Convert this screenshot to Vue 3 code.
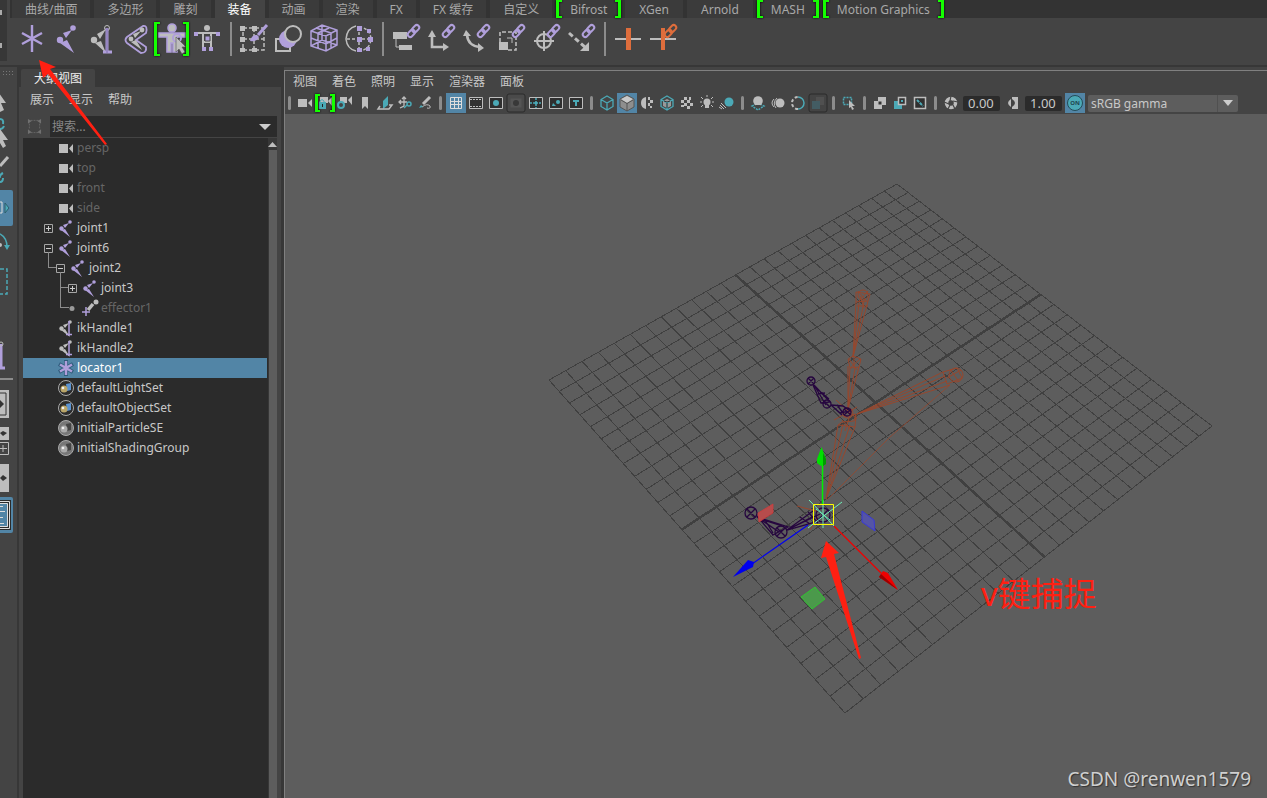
<script setup>
import { ref, computed } from 'vue';

const L = '#b09fdb';
const G = '#bdbdbd';
const T = '#4ba9b6';
const O = '#de6d3c';

const shelfTabs = [
    { name: '曲线/曲面' },
    { name: '多边形' },
    { name: '雕刻' },
    { name: '装备' },
    { name: '动画' },
    { name: '渲染' },
    { name: 'FX' },
    { name: 'FX 缓存' },
    { name: '自定义' },
    { name: 'Bifrost', plugin: true, fresh: true },
    { name: 'XGen', plugin: true },
    { name: 'Arnold', plugin: true },
    { name: 'MASH', plugin: true, fresh: true },
    { name: 'Motion Graphics', plugin: true, fresh: true },
];
const activeShelf = ref('装备');

const link = (c) => `<g fill="none" stroke="${c}" stroke-width="2"><rect x="-4" y="-2" width="8" height="5" rx="2.5" transform="translate(21 10) rotate(-45)"/><rect x="-4" y="-3" width="8" height="5" rx="2.5" transform="translate(26 6) rotate(-45)"/></g>`;

// 32 x 32 glyphs for the shelf
const shelfIcons = {
    locator: `<path d="M16 2V29M6 10L26 21M26 10L6 21" stroke="${L}" stroke-width="2.4"/>`,
    joint: `<g fill="${L}"><circle cx="22" cy="5" r="2.8"/><circle cx="9" cy="17" r="3.2"/><path d="M21 7L12 10L15 15ZM9 20L23 30L16 17Z"/></g>`,
    ikHandle: `<g fill="${G}"><circle cx="21" cy="5" r="2.5" fill="none" stroke="${G}"/><circle cx="8" cy="17" r="3.2"/><path d="M20 6L11 11L14 16ZM9 20L20 30L15 18Z"/></g><path d="M21 5V30M17 29H26" stroke="${L}" stroke-width="3"/><path d="M21 5V30" stroke="#7d6ca8"/>`,
    skin: `<path d="M22 3L6 14Q3 17 6 20L20 30Q26 30 25 24L15 17L25 10Q27 2 22 3Z" fill="none" stroke="${L}" stroke-width="1.8"/><g fill="${G}"><circle cx="21" cy="7" r="2.4"/><circle cx="10" cy="16" r="2.4"/><path d="M20 8L12 11L14 15ZM10 19L21 27L15 17Z"/></g>`,
    human: `<g fill="${G}" stroke="${L}" stroke-width="1.6"><circle cx="16" cy="5" r="4"/><path d="M3 10H29V14H21V29H17V20H15V29H11V14H3Z"/></g><circle cx="21" cy="15" r="4" fill="none" stroke="${L}" stroke-width="2"/><path d="M20 14V29L23 26L26 31L29 29L26 24H30Z" fill="${G}" stroke="#555" stroke-width=".6"/>`,
    rig: `<circle cx="16" cy="5" r="3" fill="${G}"/><path d="M6 10H26M12 10V27M20 10V27M12 19H20" stroke="${G}" stroke-width="2" fill="none"/><path d="M3 9h4v4H3zM25 9h4v4h-4zM11 24h4v4h-4zM18 24h4v4h-4z" fill="${L}"/><path d="M14 13h5v5h-5z" fill="${L}" stroke="#444"/>`,
    paint: `<path d="M5 5H26V27H5ZM5 16H26M16 5V27" fill="none" stroke="${G}" stroke-width="1.5" stroke-dasharray="4 2"/><path d="M2 3h5v5H2zM14 3h5v5h-5zM2 14h5v5H2zM2 25h5v4H2zM14 25h5v4h-5z" fill="${G}"/><path d="M29 2L20 12" stroke="${L}" stroke-width="3"/><path d="M12 18Q14 11 19 12L21 14Q19 19 12 18Z" fill="${L}"/>`,
    blend: `<path d="M12 16H3V28H17V24" fill="none" stroke="${G}" stroke-width="2"/><circle cx="15" cy="16" r="9" fill="${L}"/><circle cx="20" cy="11" r="8" fill="#444" stroke="${G}" stroke-width="2"/>`,
    lattice: `<path d="M3 8L14 2L29 7V22L18 28L3 23ZM3 8L18 13L29 7M18 13V28M3 15L18 21L29 15M10 10V25M23 10V25M8 5L23 10M21 5L10 10M3 23L14 17L29 22M14 2V17" fill="none" stroke="${L}" stroke-width="1.5"/>`,
    cluster: `<path d="M13 3Q4 5 3 16Q4 26 13 28" fill="none" stroke="${G}" stroke-width="1.5"/><path d="M16 4Q27 5 28 16Q27 27 16 28M4 16H28M16 4V28" fill="none" stroke="${G}" stroke-width="1.5" stroke-dasharray="3 2"/><path d="M14 3h5v5h-5zM14 14h5v5h-5zM14 25h5v4h-5zM24 6h4v4h-4zM25 14h5v5h-5zM23 24h4v4h-4z" fill="${L}"/>`,
    parent: `<path d="M3 9h14v7H3zM9 22h13v5H9z" fill="${G}"/><path d="M6 16V24H10" stroke="${G}" fill="none"/>${link(L)}`,
    point: `<path d="M7 12V24H20" stroke="${G}" stroke-width="2.6" fill="none"/><path d="M7 7L11 14H3ZM24 24L18 20V28Z" fill="${G}"/>${link(L)}`,
    orient: `<path d="M7 12Q8 23 20 24" stroke="${G}" stroke-width="2.6" fill="none"/><path d="M6 7L11 13H3ZM24 25L18 20V29Z" fill="${G}"/>${link(L)}`,
    scale: `<path d="M5 19V9H21V27H13" fill="none" stroke="${G}" stroke-width="1.6" stroke-dasharray="4 2"/><path d="M4 19h9v8H4z" fill="${G}"/><path d="M12 15H17V20" stroke="${G}" fill="none"/>${link(L)}`,
    aim: `<circle cx="14" cy="18" r="7" fill="none" stroke="${G}" stroke-width="2"/><path d="M14 8V28M4 18H24" stroke="${G}" stroke-width="2"/>${link(L)}`,
    pole: `<path d="M4 10L21 25" stroke="${G}" stroke-width="3" stroke-dasharray="5 3"/><path d="M24 28V19L15 28Z" fill="${G}"/>${link(L)}`,
    curve: `<path d="M3 16H29" stroke="${G}" stroke-width="2"/><path d="M14 5h5v22h-5z" fill="${O}"/>`,
    curveLink: `<path d="M3 16H29" stroke="${G}" stroke-width="2"/><path d="M14 5h4v22h-4z" fill="${O}"/>${link(O)}`,
};

const shelfGroups = [
    ['locator', 'joint', 'ikHandle', 'skin', 'human', 'rig'],
    ['paint', 'blend', 'lattice', 'cluster'],
    ['parent', 'point', 'orient', 'scale', 'aim', 'pole'],
    ['curve', 'curveLink'],
];

// 14 x 36 glyphs, the tool box is cut by the window edge
const toolIcons = {
    select: `<path d="M-4 10L6 24H1L4 31L0 33Z" fill="${G}"/>`,
    lasso: `<path d="M0 3Q4 3 3 8M0 13Q3 13 4 10" stroke="${T}" stroke-width="2" fill="none"/><path d="M0 13L8 24H3L6 30L3 32L0 27Z" fill="${G}"/>`,
    brush: `<path d="M0 13L8 4" stroke="${G}" stroke-width="3"/><path d="M3 20Q-1 22 0 25M0 29Q3 29 3 25" stroke="${T}" stroke-width="2" fill="none"/>`,
    move: `<path d="M0 12H2V23H0" stroke="#ddd" fill="none"/><path d="M5 13V23L9 18Z" fill="${T}" stroke="#2f5d6c"/>`,
    rotate: `<path d="M0 7Q7 11 7 20" stroke="${T}" fill="none" stroke-width="1.5"/><path d="M4 18H10L7 23Z" fill="${T}"/><circle cx="0" cy="18" r="2" fill="${G}"/>`,
    scale: `<path d="M0 5H7V30H0" stroke="${T}" fill="none" stroke-width="1.5" stroke-dasharray="4 2"/>`,
    joint: `<path d="M1 5V30M0 29H5" stroke="${L}" stroke-width="3"/><circle cx="1" cy="5" r="2" fill="none" stroke="${G}"/>`,
    single: `<path d="M0 4H9V32H0Z" fill="${G}"/><path d="M0 7H6V29H0" fill="none" stroke="#333"/><path d="M0 14L4 18L0 22Z" fill="#333"/>`,
    four: `<path d="M0 4h9v13H0z" fill="${G}"/><path d="M0 10L3 8L7 10L3 13Z" fill="#333"/><path d="M0 19.5H8.5V31.5H0M0 25.5H7M3 22V29" fill="none" stroke="${G}"/>`,
    two: `<path d="M0 4h9v28H0z" fill="${G}"/><path d="M0 18L3 15L7 18L3 21Z" fill="#333"/>`,
    outliner: `<path d="M0 4.5H9.5V31.5H0" fill="none" stroke="#2b2b2b" stroke-width="3"/><path d="M0 4.5H9.500V31.5H0M0 9.5H3M0 14.500H5M0 20.5H3M0 26.5H4M0 6.500H7.500V29.5H0" fill="none" stroke="#ddd"/>`,
};
const toolsTop = ['select', 'lasso', 'brush', 'move', 'rotate', 'scale'];
const layouts = ['single', 'four', 'two', 'outliner'];
const activeTool = ref('move');

// 16 x 16 glyphs for the tree
const jointSmall = (c) => `<g fill="${c}"><circle cx="12" cy="2" r="1.8"/><circle cx="3.500" cy="8.500" r="2.200"/><path d="M11 3L5 5L7 8ZM3 10L12 17L7 9Z"/></g>`;
const setSmall = (bg, ball, box) => `<circle cx="8" cy="8" r="7.5" fill="${bg}" stroke="#aaa"/><path d="M8 4L13 3V10L9 11Z" fill="${box}"/><circle cx="6" cy="9" r="3.5" fill="${ball}"/><circle cx="5" cy="8" r="1.3" fill="#eee"/>`;
const treeIcons = {
    camera: `<path d="M1 4h9v9H1zM11 8.500L15 4V13Z" fill="${G}"/>`,
    joint: jointSmall(L),
    effector: `<path d="M6 10L11 4" stroke="${G}" stroke-width="3.500"/><circle cx="14" cy="2" r="2.5" fill="${G}"/><path d="M4 7V16M0 12H8" stroke="${L}" stroke-width="1.5"/>`,
    ik: `${jointSmall(G)}<path d="M11 1V16M8 14.5H14" stroke="${L}" stroke-width="1.5"/>`,
    locator: `<path d="M8 0V16M1 4L15 12M15 4L1 12" stroke="#2f5d7c" stroke-width="4"/><path d="M8 1V15M2 4.5L14 11.5M14 4.5L2 11.5" stroke="${L}" stroke-width="2.5"/>`,
    set: setSmall('#2b2b2b', '#b8a468', '#5b92cf'),
    shader: setSmall('#777', '#aaa', '#444'),
};

const nodes = [
    { name: 'persp', icon: 'camera', dim: true },
    { name: 'top', icon: 'camera', dim: true },
    { name: 'front', icon: 'camera', dim: true },
    { name: 'side', icon: 'camera', dim: true },
    { name: 'joint1', icon: 'joint', toggle: 'plus' },
    { name: 'joint6', icon: 'joint', toggle: 'minus' },
    { name: 'joint2', icon: 'joint', toggle: 'minus', depth: 1 },
    { name: 'joint3', icon: 'joint', toggle: 'plus', depth: 2 },
    { name: 'effector1', icon: 'effector', toggle: 'dot', depth: 2, dim: true },
    { name: 'ikHandle1', icon: 'ik' },
    { name: 'ikHandle2', icon: 'ik' },
    { name: 'locator1', icon: 'locator' },
    { name: 'defaultLightSet', icon: 'set' },
    { name: 'defaultObjectSet', icon: 'set' },
    { name: 'initialParticleSE', icon: 'shader' },
    { name: 'initialShadingGroup', icon: 'shader' },
];
const selected = ref('locator1');
const search = ref('');

// 20 x 20 glyphs for the panel toolbar
const frame = `<path d="M3.5 4.5h13v11h-13z" fill="#2f2f2f" stroke="${G}"/>`;
const cube = (c) => `<path d="M10 3L16 6.5V13.5L10 17L4 13.5V6.5ZM4 6.5L10 10L16 6.5M10 10V17" fill="none" stroke="${c}" stroke-width="1.3"/>`;
const panelIcons = {
    camera: `<path d="M3 6h9v8H3zM13 10L17 6V14Z" fill="${G}"/>`,
    lock: `<path d="M5 4h8v6H5zM13 8L17 4V13Z" fill="${G}"/><path d="M4 9h7v7H4z" fill="${T}"/><path d="M5 10V8Q7 5 9 8V10" stroke="${T}" fill="none"/><path d="M7.5 11v3" stroke="#222"/>`,
    gearCam: `<path d="M5 4h7v6H5zM13 7L17 3V12Z" fill="${G}"/><circle cx="6" cy="12" r="3" fill="#444" stroke="${T}" stroke-width="2"/>`,
    bookmark: `<path d="M7 4H13V16L10 13L7 16Z" fill="${G}"/>`,
    plane: `<path d="M8 8L13 3V12L8 16Z" fill="${T}"/><path d="M5 13L3 16H14L17 12H14" fill="none" stroke="${G}" stroke-width="1.5"/>`,
    pan: `<path d="M9 4V13L5 15M4 9H12M7 6L9 4L11 6M6 7L4 9L6 11" fill="none" stroke="${G}" stroke-width="1.3"/><circle cx="14" cy="11" r="2" fill="none" stroke="${T}" stroke-width="1.5"/><path d="M12 12L9 15" stroke="${T}" stroke-width="1.5"/>`,
    pencil: `<path d="M15 4L8 11" stroke="${G}" stroke-width="3"/><path d="M7 14Q12 10 15 13Q16 16 12 15" fill="none" stroke="${G}"/><path d="M4 15L6 12L8 14Z" fill="${T}"/>`,
    grid: `<path d="M4.5 4.5h11v11h-11zM8.5 4V16M12.5 4V16M4 8.5H16M4 11.5H16" fill="none" stroke="#ddd"/>`,
    film: `<path d="M3.5 4.5h13v11h-13z" fill="#333" stroke="${G}"/><path d="M4 6.5H16M4 13.5H16" stroke="${G}" stroke-dasharray="2 1"/>`,
    gate: `${frame}<circle cx="10" cy="10" r="3" fill="${T}"/>`,
    mask: `<rect x="1" y="1" width="18" height="18" rx="2" fill="#4a4a4a" stroke="#2b2b2b"/><path d="M4.5 5.5h11v9h-11z" fill="#555"/><circle cx="10" cy="10" r="3" fill="#383838"/>`,
    field: `${frame}<path d="M4 10H16M10 5V15" stroke="${T}" stroke-width="1.5" stroke-dasharray="2 1"/><circle cx="10" cy="10" r="1.5" fill="${T}"/>`,
    safe: `${frame}<circle cx="12" cy="9" r="2" fill="${T}"/><path d="M6 13L7 10L10 13Z" fill="${T}"/>`,
    title: `${frame}<path d="M7 8H13M10 8V13" stroke="${T}" stroke-width="2"/>`,
    wire: cube(T),
    shaded: `<path d="M10 2L17 6V14L10 18L3 14V6Z" fill="#8e8e8e"/><path d="M10 3L16 6L10 10L4 6Z" fill="#c9c9c9"/><path d="M4 7L10 10.5L16 7M10 10V18M10 2L17 6V14L10 18L3 14V6Z" fill="none" stroke="#555"/>`,
    half: `<path d="M9 4Q4 5 4 10Q4 15 9 16Z" fill="${G}"/><path d="M11 4h2v3h-2zM13 7h3v3h-3zM11 10h2v3h-2zM13 13h2v2h-2z" fill="${G}"/>`,
    wireShade: `<path d="M6 8L10 6L14 8V13L10 15L6 13Z" fill="#999"/>${cube(T)}<path d="M7 8L10 9L13 8M10 10V15" stroke="#333" fill="none"/>`,
    checker: `<path d="M7 4h3v3H7zM12 4h2v3h-2zM4 7h3v3H4zM10 7h3v3h-3zM7 10h3v3H7zM13 10h3v3h-3zM4 12h3v2H4zM10 13h3v3h-3z" fill="${G}"/>`,
    bulb: `<circle cx="10" cy="9" r="3.5" fill="${G}"/><path d="M8 11h4v4H8z" fill="${G}"/><path d="M10 2V4M3 9H5M15 9H17M4 4L6 6M16 4L14 6M4 14L6 12M16 14L14 12" stroke="${G}"/>`,
    shadow: `<path d="M3 12L7 16M2 14L5 16M4 10L9 15" stroke="${G}"/><circle cx="12" cy="9" r="4.5" fill="${T}"/>`,
    ao: `<path d="M4 13L10 10L16 13L10 17Z" fill="none" stroke="${T}" stroke-width="1.5" stroke-dasharray="2 1"/><circle cx="10" cy="8" r="4.800" fill="${G}"/><path d="M8 12.500H12" stroke="#444"/>`,
    blur: `<circle cx="12" cy="10" r="4.5" fill="${G}"/><path d="M6 6Q2 10 6 14M9 5Q4 10 8 15" fill="none" stroke="${G}"/>`,
    aa: `<path d="M10 4A6 6 0 0 1 10 16" fill="none" stroke="${T}" stroke-width="1.5"/><path d="M10 16A6 6 0 0 1 10 4" fill="none" stroke="${G}" stroke-width="2" stroke-dasharray="3 2"/>`,
    depth: `<rect x="1" y="1" width="18" height="18" rx="2" fill="#444" stroke="#2b2b2b"/><path d="M8 4h8v8h-4V8H8z" fill="#505050"/><path d="M4 8h8v8H4z" fill="#435c63"/>`,
    isolate: `<path d="M4.5 4.5h8v7h-8z" fill="none" stroke="${T}" stroke-width="1.5" stroke-dasharray="2 1"/><path d="M10 7L16 13H13L15 16L13 17L12 14L10 15Z" fill="${G}"/>`,
    xrayA: `<path d="M4 8h8v8H4zM8 4h8v8H8z" fill="${G}"/><path d="M8.5 8.5h3v3h-3z" fill="#333"/>`,
    xrayB: `<path d="M4 8h8v8H4z" fill="${T}"/><path d="M8.5 4.5h7v7h-7z" fill="#333" stroke="${G}" stroke-width="1.5"/><path d="M11 7h2v2h-2z" fill="${T}"/>`,
    xrayC: `<path d="M4.5 4.5h11v11h-11z" fill="#2f2f2f" stroke="${G}" stroke-width="1.5"/><path d="M7 7L13 13" stroke="${T}" stroke-width="2" stroke-dasharray="3 1"/>`,
    exposure: `<circle cx="10" cy="10" r="4.5" fill="none" stroke="${G}" stroke-width="3.5"/><path d="M10 3L9 8M17 9L12 8M14 16L12 12M7 16L9 12M3 9L8 11" stroke="#444" stroke-width="1.2"/>`,
    gamma: `<path d="M8 6Q2 10 8 14Z" fill="${G}"/><path d="M9 4H15V16H9V14Q15 10 9 6Z" fill="${G}"/>`,
};
const panelGroups = [
    ['camera', 'lock', 'gearCam', 'bookmark', 'plane', 'pan', 'pencil'],
    ['grid', 'film', 'gate', 'mask', 'field', 'safe', 'title'],
    ['wire', 'shaded', 'half', 'wireShade', 'checker', 'bulb', 'shadow'],
    ['ao', 'blur', 'aa', 'depth'],
    ['isolate'],
    ['xrayA', 'xrayB', 'xrayC'],
];
const panelOn = ['grid', 'shaded'];
const exposure = ref('0.00');
const gamma = ref('1.00');

// ground plane in perspective
const top = [897, 184];
const right = [1212, 426];
const bottom = [845, 713];
const left = [549, 380];

const project = (u, v) => {
    const dx1 = right[0] - bottom[0];
    const dx2 = left[0] - bottom[0];
    const sx = top[0] - right[0] + bottom[0] - left[0];
    const dy1 = right[1] - bottom[1];
    const dy2 = left[1] - bottom[1];
    const sy = top[1] - right[1] + bottom[1] - left[1];
    const det = dx1 * dy2 - dx2 * dy1;
    const g = (sx * dy2 - dx2 * sy) / det;
    const h = (dx1 * sy - sx * dy1) / det;
    const w = g * u + h * v + 1;
    return [
        ((right[0] - top[0] + g * right[0]) * u + (left[0] - top[0] + h * left[0]) * v + top[0]) / w,
        ((right[1] - top[1] + g * right[1]) * u + (left[1] - top[1] + h * left[1]) * v + top[1]) / w,
    ];
};

const CELLS = 24;
const gridLines = computed(() => {
    const out = [];
    for (let i = 0; i <= CELLS; i++) {
        const t = i / CELLS;
        out.push({ a: project(t, 0), b: project(t, 1), axis: i === CELLS / 2 });
        out.push({ a: project(0, t), b: project(1, t), axis: i === CELLS / 2 });
    }
    return out;
});
</script>

<template>
    <div class="app">
        <header class="shelf">
            <div class="shelf-side">
                <i></i>
                <i></i>
            </div>
            <div class="shelf-main">
                <nav class="shelf-tabs">
                    <button
                        v-for="tab in shelfTabs"
                        :key="tab.name"
                        type="button"
                        class="shelf-tab"
                        :class="{ active: tab.name === activeShelf, plugin: tab.plugin, fresh: tab.fresh }"
                        @click="activeShelf = tab.name"
                    >{{ tab.name }}</button>
                </nav>
                <div class="shelf-icons">
                    <div v-for="(group, g) in shelfGroups" :key="g" class="group">
                        <button
                            v-for="icon in group"
                            :key="icon"
                            type="button"
                            class="shelf-btn"
                            :class="{ fresh: icon === 'human' }"
                            :aria-label="icon"
                        >
                            <svg viewBox="0 0 32 32" v-html="shelfIcons[icon]"></svg>
                        </button>
                    </div>
                </div>
            </div>
        </header>

        <main class="work">
            <aside class="tools">
                <div class="grip"></div>
                <button
                    v-for="tool in toolsTop"
                    :key="tool"
                    type="button"
                    class="tool"
                    :class="{ active: tool === activeTool }"
                    :aria-label="tool"
                    @click="activeTool = tool"
                >
                    <svg viewBox="0 0 14 36" v-html="toolIcons[tool]"></svg>
                </button>
                <button type="button" class="tool last-tool" aria-label="joint">
                    <svg viewBox="0 0 14 36" v-html="toolIcons.joint"></svg>
                </button>
                <hr class="tool-line">
                <button
                    v-for="item in layouts"
                    :key="item"
                    type="button"
                    class="tool"
                    :class="{ active: item === 'outliner' }"
                    :aria-label="item"
                >
                    <svg viewBox="0 0 14 36" v-html="toolIcons[item]"></svg>
                </button>
            </aside>

            <section class="outliner">
                <div class="outliner-tabs">
                    <h2>大纲视图</h2>
                </div>
                <nav class="menu outliner-menu">
                    <button type="button">展示</button>
                    <button type="button">显示</button>
                    <button type="button">帮助</button>
                </nav>
                <div class="search">
                    <svg viewBox="0 0 16 18" class="search-icon">
                        <path d="M4 2.5H12M4 15.5H12M2.5 6V12M13.5 6V12" stroke="#666" stroke-dasharray="2 1" />
                        <path d="M1 1L5 3L1 6ZM15 1L11 3L15 6ZM1 12L5 15L1 17ZM15 12L11 15L15 17Z" fill="#707070" />
                    </svg>
                    <div class="search-box">
                        <input v-model="search" type="text" placeholder="搜索..." aria-label="搜索">
                        <svg viewBox="0 0 12 6" class="caret"><path d="M0 0H12L6 6Z" fill="#ccc" /></svg>
                    </div>
                </div>
                <div class="tree-wrap">
                    <ul class="tree">
                        <li
                            v-for="node in nodes"
                            :key="node.name"
                            class="node"
                            :class="[`depth-${node.depth || 0}`, node.toggle, { dim: node.dim, selected: node.name === selected }]"
                            @click="selected = node.name"
                        >
                            <span class="toggle">
                                <svg v-if="node.toggle && node.toggle !== 'dot'" viewBox="0 0 11 11">
                                    <path d="M1.5 1.5h8v8h-8z" fill="#2b2b2b" stroke="#a5a5a5" />
                                    <path d="M3 5.5H8" stroke="#ccc" />
                                    <path v-if="node.toggle === 'plus'" d="M5.5 3V8" stroke="#ccc" />
                                </svg>
                                <svg v-if="node.toggle === 'dot'" viewBox="0 0 11 11"><circle cx="5" cy="5.5" r="2.5" fill="#9a9a9a" /></svg>
                            </span>
                            <svg class="node-icon" viewBox="0 0 16 16" v-html="treeIcons[node.icon]"></svg>
                            <span>{{ node.name }}</span>
                        </li>
                    </ul>
                    <div class="scroll">
                        <svg viewBox="0 0 9 12"><path d="M0 9L4.5 4L9 9Z" fill="#bdbdbd" /></svg>
                        <div class="thumb"></div>
                    </div>
                </div>
            </section>

            <section class="panel">
                <nav class="menu panel-menu">
                    <button type="button">视图</button>
                    <button type="button">着色</button>
                    <button type="button">照明</button>
                    <button type="button">显示</button>
                    <button type="button">渲染器</button>
                    <button type="button">面板</button>
                </nav>
                <div class="panel-bar">
                    <div v-for="(group, g) in panelGroups" :key="g" class="group">
                        <button
                            v-for="icon in group"
                            :key="icon"
                            type="button"
                            class="panel-btn"
                            :class="{ active: panelOn.includes(icon), fresh: icon === 'lock' }"
                            :aria-label="icon"
                        >
                            <svg viewBox="0 0 20 20" v-html="panelIcons[icon]"></svg>
                        </button>
                    </div>
                    <div class="group fields">
                        <button type="button" class="panel-btn" aria-label="exposure">
                            <svg viewBox="0 0 20 20" v-html="panelIcons.exposure"></svg>
                        </button>
                        <input v-model="exposure" type="text" aria-label="exposure value">
                        <button type="button" class="panel-btn" aria-label="gamma">
                            <svg viewBox="0 0 20 20" v-html="panelIcons.gamma"></svg>
                        </button>
                        <input v-model="gamma" type="text" aria-label="gamma value">
                        <button type="button" class="panel-btn active" aria-label="color management">
                            <span class="on">ON</span>
                        </button>
                        <div class="select">
                            <select aria-label="view transform">
                                <option>sRGB gamma</option>
                            </select>
                            <svg viewBox="0 0 10 6"><path d="M0 0H10L5 6Z" fill="#ccc" /></svg>
                        </div>
                    </div>
                </div>

                <div class="viewport">
                    <svg class="scene" viewBox="285 114 982 684">
                        <g shape-rendering="crispEdges" stroke="#404040">
                            <line
                                v-for="(l, i) in gridLines"
                                :key="i"
                                :x1="l.a[0]"
                                :y1="l.a[1]"
                                :x2="l.b[0]"
                                :y2="l.b[1]"
                                :stroke-width="l.axis ? 2.5 : 1"
                            />
                        </g>

                        <!-- inactive skeleton -->
                        <g fill="none" stroke="#97472d" stroke-width="1">
                            <circle cx="863" cy="295" r="5" />
                            <path d="M856 292L870 294L868 301L856 302ZM858 291L866 301M868 291L858 302M856 302L853 357L868 301M859 303L853 357L864 302M860 296L864 308M857 306H868" />
                            <path d="M848 359L853 356L861 359L859 367L850 368ZM848 366L848 409L859 367M850 368L848 409L855 368M849 359L857 370M860 359L850 368M854 357V367" />
                            <circle cx="956" cy="375" r="7" />
                            <path d="M943 372L857 414L950 385M945 376L857 414L947 381M943 372L947 384L962 378L957 368L943 372M950 369L959 382M947 378L961 370" />
                            <path d="M950 385L890 437M890 437L827 500" stroke-width=".8" />
                            <circle cx="848" cy="413" r="5" />
                            <path d="M836 400L857 419M834 420L857 407M844 409L852 417M843 417L856 414L854 421L842 422L838 425L855 427L856 415M838 425L826 499L855 427M843 424L826 499L850 425M842 420L852 431M797 506L820 512M810 530L818 517M852 409L845 431" />
                        </g>

                        <!-- ik chains -->
                        <g fill="none" stroke="#26063f" stroke-width="1.3">
                            <circle cx="811" cy="381" r="4" />
                            <circle cx="827" cy="404" r="4" />
                            <circle cx="847" cy="412" r="4" />
                            <path d="M808 378L814 384M814 378L808 384M813 385L821 403L830 402L814 385L826 405M816 388L829 399M818 394L825 393M831 405L843 406L850 411L840 413L831 405L842 415M844 409L851 415M851 409L844 415M837 405L843 413M824 401L830 407" />
                            <circle cx="751" cy="513" r="6" />
                            <circle cx="781" cy="532" r="6" />
                            <circle cx="823" cy="515" r="7" />
                            <path d="M747 509L755 517M755 509L747 517M777 528L785 536M785 528L777 536M757 516L773 535L788 527L757 517L779 532M760 519L782 526M765 520L773 533M787 530L813 511M787 530L815 522M787 530L812 517M787 530L820 514M800 517L810 524M808 512L818 523M818 510L828 520M828 510L818 520" />
                        </g>

                        <!-- manipulator -->
                        <path d="M809 500L836 528M842 502L808 528M823 500V528M816 509L830 520" stroke="#6ff0b8" fill="none" />
                        <path d="M822.5 464V504" stroke="#00f000" stroke-width="1.5" />
                        <path d="M821.5 447L826 459V464L821 466L817 463V459Z" fill="#00e000" />
                        <path d="M823 453L826 459V464L823 466Z" fill="#009a00" />
                        <path d="M808 525L752 564" stroke="#0000f0" stroke-width="1.2" />
                        <path d="M733 577L748 560L754 562L753 567Z" fill="#0000ee" />
                        <path d="M834 526L882 574" stroke="#f00000" stroke-width="1.2" />
                        <path d="M898 590L879 577L883 571L888 573Z" fill="#ee0000" />
                        <path d="M898 590L879 577L881 574Z" fill="#990000" />
                        <path d="M758 513L773 504V513L759 522Z" fill="#b64c4c" stroke="#d83a3a" stroke-width=".7" />
                        <path d="M862 511L874 520L875 531L862 522Z" fill="#5555a5" stroke="#3838d8" />
                        <path d="M801 597L815 587L825 599L812 609Z" fill="#4b994b" stroke="#2fc42f" />
                        <path d="M813.5 504.5h20v20h-20z" fill="none" stroke="#ffff00" />

                        <path d="M826 541L839 553L834 554L861 658L859 659L826 557L821 558Z" fill="#ff2012" />
                        <text x="981" y="606" class="note">v键捕捉</text>
                    </svg>
                    <span class="watermark">CSDN @renwen1579</span>
                </div>
            </section>
        </main>

        <svg class="pointer" viewBox="0 0 120 150">
            <path d="M39 60L56 67L50 69L107 144L105 145L48 74L43 78Z" fill="#ff2012" />
        </svg>
    </div>
</template>

<style>
body {
    margin: 0;
    background: #444444;
}
</style>

<style scoped>
.app {
    position: relative;
    display: flex;
    flex-direction: column;
    height: 100vh;
    overflow: hidden;
    background: #444444;
    color: #c8c8c8;
    font-family: "Noto Sans", "Noto Sans CJK SC", sans-serif;
    font-size: 12px;
    line-height: 18px;
}

button,
input,
select {
    margin: 0;
    padding: 0;
    border: 0;
    background: none;
    color: inherit;
    font: inherit;
    outline: none;
}

svg {
    display: block;
    overflow: visible;
}

.group {
    display: flex;
    align-items: center;
}

/* --- SHELF --- */
.shelf {
    display: flex;
    gap: 3px;
    height: 65px;
    flex: none;
    border-bottom: 2px solid #373737;
}

.shelf-side {
    display: flex;
    flex-direction: column;
    gap: 28px;
    width: 7px;
    height: 51px;
    padding-top: 10px;
    background: #373737;
}

.shelf-side i {
    width: 2px;
    height: 5px;
    background: #aaaaaa;
}

.shelf-main {
    flex: 1;
    min-width: 0;
}

.shelf-tabs {
    display: flex;
    gap: 4px;
    height: 18px;
    padding-left: 2px;
    background: #333333;
}

.shelf-tab {
    position: relative;
    flex: none;
    padding: 2px 13px 0;
    background: #3b3b3b;
    color: #a8a8a8;
    line-height: 16px;
    white-space: nowrap;
}

.shelf-tab.plugin {
    padding: 2px 14px 0;
}

.shelf-tab.active {
    background: #444444;
    color: #ffffff;
}

.fresh::before,
.fresh::after {
    content: "";
    position: absolute;
    top: 0;
    bottom: 0;
    width: 3px;
    border: solid #14ff00;
    border-width: 2px 3px;
    filter: drop-shadow(0 0 1px #000000);
}

.fresh::before {
    left: 0;
    border-right: 0;
}

.fresh::after {
    right: 0;
    border-left: 0;
}

.shelf-icons {
    display: flex;
    gap: 12px;
    padding: 4px 4px 0;
}

.shelf-icons .group + .group,
.panel-bar .group {
    position: relative;
}

.shelf-icons .group + .group::before {
    content: "";
    position: absolute;
    left: -6px;
    top: 0;
    bottom: 0;
    width: 2px;
    background: #8c8c8c;
}

.shelf-btn {
    position: relative;
    width: 35px;
    height: 34px;
}

.shelf-btn svg {
    width: 32px;
    height: 32px;
    margin: 0 auto;
}

/* --- TOOL BOX --- */
.work {
    display: flex;
    flex: 1;
    min-height: 0;
}

.tools {
    display: flex;
    flex-direction: column;
    gap: 1px;
    width: 17px;
    flex: none;
    border-right: 2px solid #373737;
}

.grip {
    height: 5px;
    margin: 3px 4px 3px 2px;
    background: radial-gradient(#777777 1px, transparent 1px) 0 0 / 3px 3px;
}

.tool {
    width: 13px;
    height: 36px;
    border-radius: 0 2px 2px 0;
    overflow: hidden;
}

.tool.active,
.panel-btn.active {
    background: #5285a6;
}

.tool svg {
    width: 14px;
    height: 36px;
}

.last-tool {
    margin-top: 38px;
}

.tool-line {
    width: 13px;
    height: 2px;
    margin: 2px 0 5px;
    border: 0;
    background: #8c8c8c;
}

/* --- OUTLINER --- */
.outliner {
    display: flex;
    flex-direction: column;
    width: 262px;
    flex: none;
}

.outliner-tabs {
    height: 20px;
    padding: 2px 0 0 2px;
    background: #373737;
    box-sizing: border-box;
}

.outliner-tabs h2 {
    display: inline-block;
    margin: 0;
    padding: 1px 13px 0;
    background: #444444;
    border-radius: 2px 2px 0 0;
    color: #eeeeee;
    font-size: 12px;
    font-weight: 400;
}

.menu {
    display: flex;
    gap: 15px;
}

.outliner-menu {
    padding: 4px 11px 8px;
}

.search {
    display: flex;
    align-items: center;
    gap: 8px;
    margin: -1px 4px 1px 8px;
}

.search-icon {
    width: 15px;
    height: 17px;
}

.search-box {
    display: flex;
    align-items: center;
    flex: 1;
    min-width: 0;
    padding: 0 6px 0 2px;
    background: #2b2b2b;
}

.search-box input {
    flex: 1;
    min-width: 0;
    height: 21px;
}

.search-box input::placeholder {
    color: #888888;
    opacity: 1;
}

.caret {
    width: 12px;
    height: 6px;
}

.tree-wrap {
    display: flex;
    flex: 1;
    margin: 0 4px;
}

.tree {
    flex: 1;
    margin: 0;
    padding: 0;
    background: #2b2b2b;
    list-style: none;
}

.node {
    position: relative;
    display: flex;
    align-items: center;
    height: 20px;
    padding-left: 20px;
    white-space: nowrap;
}

.node.depth-1 {
    padding-left: 32px;
}

.node.depth-2 {
    padding-left: 44px;
}

.node.dim {
    color: #666666;
}

.node.selected {
    margin-right: 1px;
    background: #5285a6;
    color: #ffffff;
}

.depth-1::before,
.depth-2::before {
    content: "";
    position: absolute;
    top: -6px;
    left: 25px;
    width: 8px;
    height: 15px;
    border: solid #8c8c8c;
    border-width: 0 0 1px 1px;
}

.depth-2::before {
    left: 37px;
}

.depth-2.dot::before {
    top: -10px;
    height: 19px;
}

.toggle {
    position: relative;
    width: 11px;
    margin-right: 4px;
}

.toggle svg {
    width: 11px;
    height: 11px;
}

.node-icon {
    width: 16px;
    height: 16px;
    margin-right: 3px;
}

.scroll {
    width: 9px;
    display: flex;
    flex-direction: column;
    background: #373737;
}

.scroll svg {
    width: 9px;
    height: 12px;
}

.thumb {
    flex: 1;
    margin-left: 1px;
    background: #5d5d5d;
}

/* --- VIEW PANEL --- */
.panel {
    display: flex;
    flex-direction: column;
    flex: 1;
    min-width: 0;
    border: solid #373737;
    border-width: 0 0 0 3px;
    padding-top: 3px;
}

.panel-menu {
    padding: 2px 8px 1px;
    border: solid #808080;
    border-width: 1px 0 0 1px;
}

.panel-bar {
    display: flex;
    gap: 11px;
    height: 22px;
    padding-left: 10px;
    align-items: center;
    border-left: 1px solid #808080;
}

.panel-bar .group::before {
    content: "";
    position: absolute;
    left: -7px;
    top: 3px;
    bottom: 3px;
    width: 3px;
    border-radius: 2px;
    background: #8c8c8c;
}

.panel-btn {
    position: relative;
    flex: none;
    width: 20px;
    height: 20px;
}

.panel-btn svg {
    width: 20px;
    height: 20px;
}

.panel-btn.fresh::before,
.panel-btn.fresh::after {
    width: 2px;
    top: 1px;
    bottom: 1px;
}

.fields input {
    width: 32px;
    height: 15px;
    margin: 0 3px 0 2px;
    padding-left: 5px;
    border-radius: 2px;
    background: #2b2b2b;
    font-size: 13px;
}

.on {
    display: block;
    width: 14px;
    height: 14px;
    margin: 0 auto;
    border: 1px solid #234c58;
    border-radius: 50%;
    background: #4ba9b6;
    color: #1f4650;
    font-size: 6px;
    font-weight: 700;
    line-height: 14px;
}

.select {
    position: relative;
    margin-left: 3px;
}

.select select {
    width: 150px;
    height: 17px;
    padding-left: 3px;
    border-radius: 2px;
    background: linear-gradient(#505050, #505050) 129px 0 / 1px 100% no-repeat #5d5d5d;
    line-height: 17px;
    appearance: none;
    display: block;
}

.select svg {
    position: absolute;
    right: 5px;
    top: 5px;
    width: 10px;
    height: 6px;
    pointer-events: none;
}

.viewport {
    position: relative;
    flex: 1;
    min-height: 0;
    border-left: 1px solid #808080;
    background: #5d5d5d;
    overflow: hidden;
}

.scene {
    width: 100%;
    height: 100%;
}

.note {
    fill: #ff2012;
    font-size: 33px;
}

.watermark {
    position: absolute;
    right: 16px;
    bottom: 6px;
    color: #d0d0d0;
    font-size: 19px;
    line-height: 26px;
    text-shadow: 1px 1px 1px #333333;
}

/* red arrow over the shelf */
.pointer {
    position: absolute;
    top: 0;
    left: 0;
    width: 120px;
    height: 150px;
    pointer-events: none;
}
</style>
